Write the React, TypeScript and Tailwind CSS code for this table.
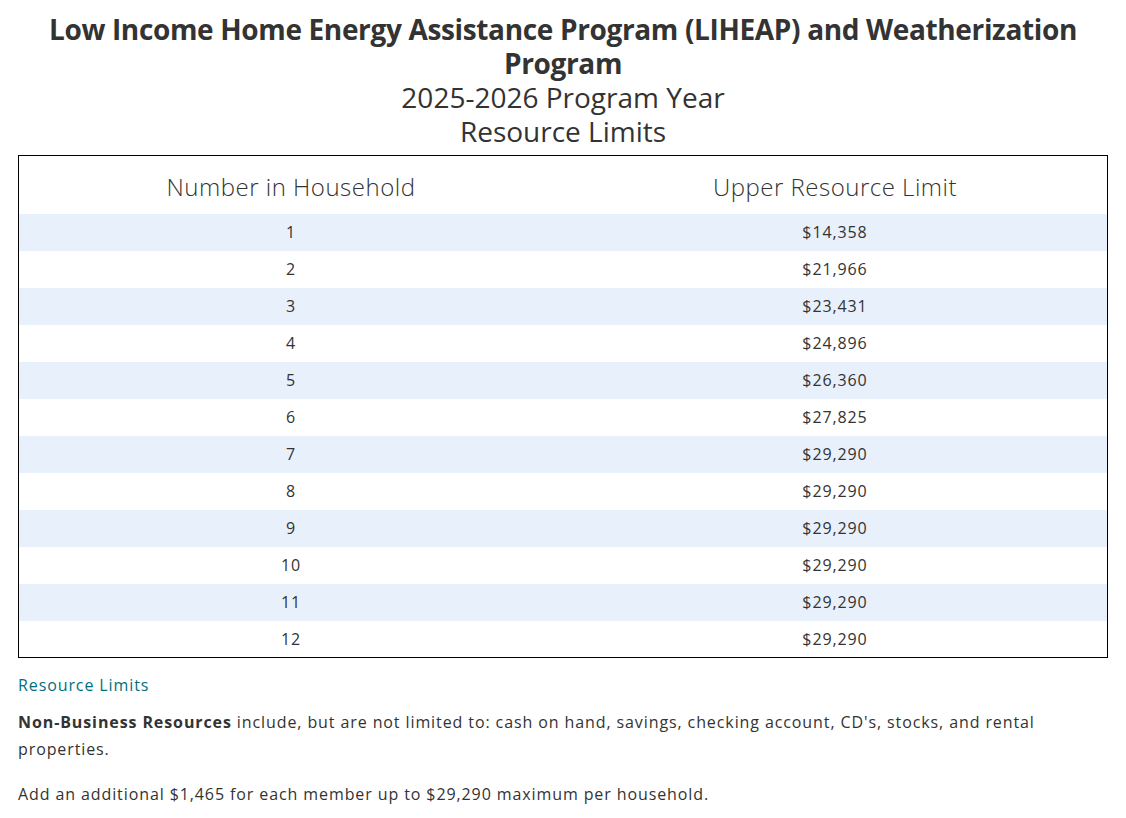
const rows: [string, string][] = [
  ["1", "$14,358"],
  ["2", "$21,966"],
  ["3", "$23,431"],
  ["4", "$24,896"],
  ["5", "$26,360"],
  ["6", "$27,825"],
  ["7", "$29,290"],
  ["8", "$29,290"],
  ["9", "$29,290"],
  ["10", "$29,290"],
  ["11", "$29,290"],
  ["12", "$29,290"],
];

export default function App() {
  return (
    <div className="min-h-screen bg-white text-[#333333] font-['Open_Sans','Noto_Sans',sans-serif] px-[18px] pt-3">
      <div className="text-center">
        <h1 className="text-[28px] leading-[34px] font-bold tracking-[-0.35px]">
          Low Income Home Energy Assistance Program (LIHEAP) and Weatherization Program
        </h1>
        <p className="text-[28px] leading-[34px] font-normal">2025-2026 Program Year</p>
        <p className="text-[28px] leading-[34px] font-normal">Resource Limits</p>
      </div>

      <table className="mt-[7px] w-full border border-black border-collapse table-fixed">
        <thead>
          <tr className="h-[58px]">
            <th className="text-[24px] font-light tracking-[0.5px] pt-1">Number in Household</th>
            <th className="text-[24px] font-light tracking-[0.5px] pt-1">Upper Resource Limit</th>
          </tr>
        </thead>
        <tbody className="tracking-[0.9px]">
          {rows.map(([n, limit], i) => (
            <tr key={n} className={`h-[37px] ${i % 2 === 0 ? "bg-[#e8f0fb]" : "bg-white"}`}>
              <td className="text-center text-[16px]">{n}</td>
              <td className="text-center text-[16px]">{limit}</td>
            </tr>
          ))}
        </tbody>
      </table>

      <div className="tracking-[0.9px]">
        <div className="mt-[15px] text-[16px] leading-6">
          <a href="#" className="text-[#00707f]">Resource Limits</a>
        </div>
        <p className="mt-3 text-[16px] leading-[27px]">
          <strong className="font-bold">Non-Business Resources</strong> include, but are not limited to: cash on hand, savings, checking account, CD's, stocks, and rental properties.
        </p>
        <p className="mt-[18px] text-[16px] leading-[27px]">
          Add an additional $1,465 for each member up to $29,290 maximum per household.
        </p>
      </div>
    </div>
  );
}
